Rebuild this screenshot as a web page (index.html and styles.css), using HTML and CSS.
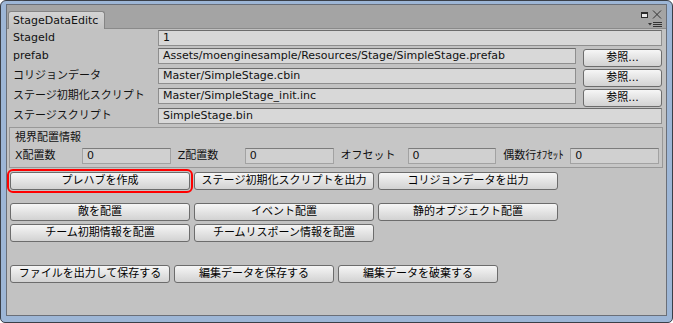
FILE: index.html
```html
<!DOCTYPE html>
<html lang="ja">
  <head>
    <meta charset="UTF-8" />
    <meta name="viewport" content="width=device-width, initial-scale=1.0" />
    <title>StageDataEditor</title>
    <link rel="stylesheet" href="styles.css">
  </head>
  <body>
    <div class="window">
      <div class="panel">
        <div class="tabbar">
          <div class="tab">StageDataEditc</div>
          <svg class="tools" width="24" height="20" viewBox="0 0 24 20">
            <rect x="1" y="3" width="7" height="6" fill="#2a2a2a" />
            <rect x="2" y="5" width="5" height="3" fill="#e8e8e8" />
            <path d="M13 1.5 L21 9.5 M21 1.5 L13 9.5" stroke="#333" stroke-width="1" fill="none" />
            <path d="M8 14 h4 l-2 2.5 z" fill="#333" />
            <path d="M13 13.5 h9 M13 15.5 h9 M13 17.5 h9" stroke="#333" stroke-width="1" />
          </svg>
        </div>

        <div class="content">
          <div class="row short">
            <span class="label">StageId</span>
            <div class="field">1</div>
          </div>
          <div class="row">
            <span class="label">prefab</span>
            <div class="field">Assets/moenginesample/Resources/Stage/SimpleStage.prefab</div>
            <button class="btn ref">参照...</button>
          </div>
          <div class="row">
            <span class="label">コリジョンデータ</span>
            <div class="field">Master/SimpleStage.cbin</div>
            <button class="btn ref">参照...</button>
          </div>
          <div class="row">
            <span class="label">ステージ初期化スクリプト</span>
            <div class="field">Master/SimpleStage_init.inc</div>
            <button class="btn ref">参照...</button>
          </div>
          <div class="row short">
            <span class="label">ステージスクリプト</span>
            <div class="field">SimpleStage.bin</div>
          </div>

          <div class="group">
            <div class="group-title">視界配置情報</div>
            <div class="group-fields">
              <div class="cell"><span class="glabel">X配置数</span><div class="field dim">0</div></div>
              <div class="cell"><span class="glabel">Z配置数</span><div class="field dim">0</div></div>
              <div class="cell"><span class="glabel">オフセット</span><div class="field dim">0</div></div>
              <div class="cell"><span class="glabel">偶数行ｵﾌｾｯﾄ</span><div class="field dim">0</div></div>
            </div>
          </div>

          <div class="btns row-a">
            <button class="btn wide selected">プレハブを作成</button>
            <button class="btn wide">ステージ初期化スクリプトを出力</button>
            <button class="btn wide">コリジョンデータを出力</button>
          </div>
          <div class="btns row-b">
            <button class="btn wide">敵を配置</button>
            <button class="btn wide">イベント配置</button>
            <button class="btn wide">静的オブジェクト配置</button>
          </div>
          <div class="btns row-c">
            <button class="btn wide">チーム初期情報を配置</button>
            <button class="btn wide">チームリスポーン情報を配置</button>
          </div>
          <div class="btns row-d">
            <button class="btn narrow">ファイルを出力して保存する</button>
            <button class="btn narrow">編集データを保存する</button>
            <button class="btn narrow">編集データを破棄する</button>
          </div>
        </div>
      </div>
    </div>
  </body>
</html>
```

FILE: styles.css
```css
body {
  margin: 0;
  background: #ffffff;
  font-family: "DejaVu Sans", "Noto Sans CJK JP", sans-serif;
  font-size: 11px;
  color: #111;
}

/* outer window frame */
.window {
  width: 673px;
  height: 323px;
  box-sizing: border-box;
  border: 1px solid #3a3f48;
  border-radius: 6px 6px 5px 5px;
  background: #9db6d6;
  padding: 3px 5px 6px 5px;
}

.panel {
  height: 100%;
  box-sizing: border-box;
  border: 1px solid #6a6f78;
  display: flex;
  flex-direction: column;
}

/* tab strip */
.tabbar {
  height: 23px;
  flex: none;
  background: #a4a4a4;
  display: flex;
  align-items: flex-end;
  padding-left: 1px;
}

.tab {
  height: 18px;
  box-sizing: border-box;
  width: 97px;
  padding-left: 4px;
  border: 1px solid #858585;
  border-bottom: none;
  border-radius: 3px 3px 0 0;
  background: linear-gradient(#d4d4d4, #c2c2c2);
  line-height: 17px;
  white-space: nowrap;
  overflow: hidden;
  margin-bottom: -1px;
  position: relative;
}

.tools {
  margin-left: auto;
  align-self: flex-start;
  margin-top: 4px;
  margin-right: 2px;
}

/* main area */
.content {
  flex: 1;
  background: #c2c2c2;
  border-top: 1px solid #8a8a8a;
  padding: 1px 3px 0 3px;
}

.row {
  display: flex;
  align-items: flex-start;
  height: 20px;
}

.row.short {
  height: 18px;
}

.label {
  width: 145px;
  padding-left: 3px;
  line-height: 16px;
  white-space: nowrap;
  flex: none;
}

.field {
  flex: 1;
  height: 16px;
  box-sizing: border-box;
  border: 1px solid #8e8e8e;
  border-top-color: #6c6c6c;
  background: #d8d8d8;
  padding: 0 4px;
  line-height: 14px;
  white-space: nowrap;
  overflow: hidden;
  margin-right: 1px;
}

.btn {
  height: 18px;
  box-sizing: border-box;
  border: 1px solid #6c6c6c;
  border-radius: 3px;
  background: linear-gradient(#f6f6f6, #e2e2e2 55%, #d2d2d2);
  font-family: inherit;
  font-size: 11px;
  color: #000;
  padding: 0;
  line-height: 16px;
  white-space: nowrap;
}

.btn.ref {
  width: 79px;
  margin-left: 6px;
  margin-top: 1px;
  margin-right: 1px;
  flex: none;
}

/* 視界配置情報 box */
.group {
  margin: 1px 0 0 -1px;
  height: 41px;
  box-sizing: border-box;
  border: 1px solid #989898;
  background: #c6c6c6;
  padding: 2px 3px 2px 5px;
}

.group-title {
  line-height: 16px;
}

.group-fields {
  margin-top: 2px;
  display: grid;
  grid-template-columns: repeat(4, 1fr);
  column-gap: 7px;
}

.cell {
  display: flex;
}

.glabel {
  width: 67px;
  flex: none;
  line-height: 16px;
  white-space: nowrap;
}

.field.dim {
  background: #d0d0d0;
  border-color: #a2a2a2;
  border-top-color: #7c7c7c;
  margin-right: 0;
}

/* button rows */
.btns {
  display: flex;
  gap: 4px;
}

.btn.wide {
  width: 180px;
}

.btn.narrow {
  width: 160px;
}

.row-a {
  margin-top: 4px;
}

.row-b {
  margin-top: 13px;
}

.row-c {
  margin-top: 3px;
}

.row-d {
  margin-top: 23px;
}

.btn.selected {
  outline: 2px solid #ff0000;
  outline-offset: 1px;
}
```
